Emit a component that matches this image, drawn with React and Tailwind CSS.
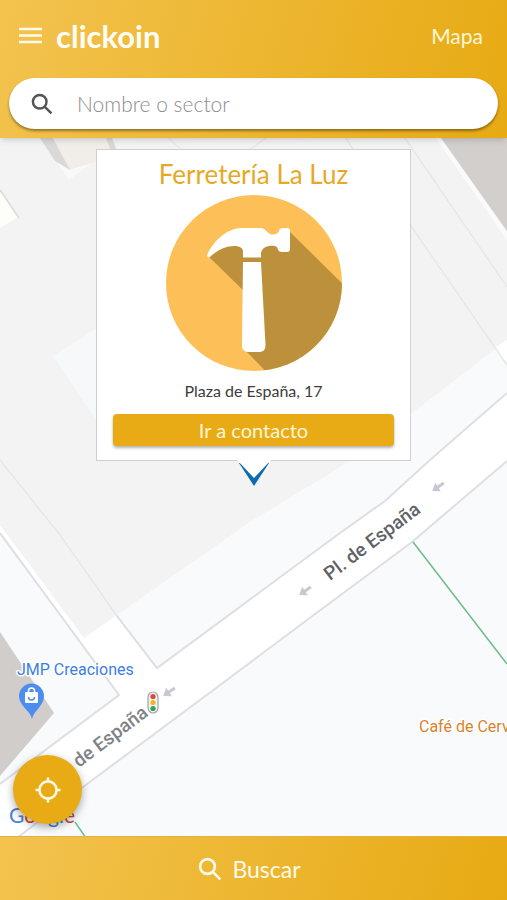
import React from 'react';

const MenuIcon = () => (
  <svg width="24" height="24" viewBox="0 0 24 24" fill="#fffbea">
    <rect x="1" y="3.700" width="23" height="2.600" rx="0.5" />
    <rect x="1" y="10.200" width="23" height="2.600" rx="0.5" />
    <rect x="1" y="16.700" width="23" height="2.600" rx="0.5" />
  </svg>
);

const SearchIcon = ({ size, strokeWidth }) => (
  <svg width={size} height={size} viewBox="0 0 24 24" fill="none" stroke="currentColor" strokeWidth={strokeWidth}>
    <circle cx="9.5" cy="9.5" r="7.4" />
    <path d="M14.8 14.8 L22.3 22.3" />
  </svg>
);

const LocationIcon = () => (
  <svg width="26" height="26" viewBox="0 0 26 26" fill="none" stroke="#fff9e8" strokeWidth="2.6">
    <circle cx="13" cy="13" r="8.6" />
    <path d="M13 0.5 V4.500 M13 21.500 V25.5 M0.5 13 H4.500 M21.500 13 H25.5" />
  </svg>
);

const HammerLogo = () => (
  <svg className="w-[176px] h-[176px]" viewBox="0 0 176 176" role="img" aria-label="Martillo">
    <defs>
      <clipPath id="disc">
        <circle cx="88" cy="88" r="88" />
      </clipPath>
    </defs>
    <circle cx="88" cy="88" r="88" fill="#fdc058" />
    <g clipPath="url(#disc)">
      <path d="M43 62 L60 51 L90 48 L124 37 L186 98 L186 186 L109 186 L80 156 L80 98 Z" fill="#bd913b" />
    </g>
    <g fill="#fff">
      <path d="M42 62 C40 61 42 58 43 56 C50 44 62 33 76 33 L95 33 C99 33 101 38 105 39.500 C110 40 112 38 113 36 C113 34 115 33 117 33 L121 33 C123 33 124 34 124 36 L124 53 C124 56 123 57 121 57 L116 57 C112 57 112 54 111 52 C106 49 96 51 95 58 L95 62.500 L77 62.500 L77 56 C76 48 57 50 46 60 C44 62 43 63 42 62 Z" />
      <path d="M77 67 L95 67 L99.500 150 C99.500 155 97 157 93 157 L83 157 C79 157 76 155 76 151 Z" />
    </g>
  </svg>
);

const RoadArrow = ({ x, y }) => (
  <g transform={`translate(${x} ${y}) rotate(-34)`} fill="#c6c9d2">
    <path d="M-7 0 L0 -5 L0 -1.500 L7 -1.500 L7 1.500 L0 1.500 L0 5 Z" />
  </g>
);

const StreetMap = () => (
  <svg
    className="absolute inset-0 w-full h-full"
    viewBox="0 138 507 698"
    preserveAspectRatio="xMidYMid slice"
    fontFamily="Roboto, 'Liberation Sans', sans-serif"
  >
    <rect x="0" y="138" width="507" height="698" fill="#f8fafc" />

    {/* Roads */}
    <path d="M0 460 L60 535 L117 616 L157 668 L260 592 L340 533 L385 501 L430 460 L507 393 L507 461 L412 542 L307 620 L200 700 L83 787 L17 838 L0 838 L0 784 L119 695 L0 533 Z" fill="#fff" />
    <g fill="none" stroke="#dddfe2" strokeWidth="2">
      <path d="M0 460 L60 535 L117 616 L157 668 L260 592 L340 533 L385 501 L430 460 L507 393" />
      <path d="M0 533 L119 695 L0 784" />
      <path d="M507 461 L412 542 L307 620 L200 700 L83 787 L17 838" />
    </g>

    {/* Highlighted area */}
    <path d="M0 138 L507 138 L507 340 L350 461 L250 522 L84 638 L0 525 Z" fill="#f3f3f3" />
    <path d="M496 347 L507 340 L507 363 Z" fill="#fff" />
    <g fill="none" stroke="#e7e7e7" strokeWidth="1.500">
      <path d="M0 460 L60 535 L117 616" />
      <path d="M405 138 L507 287" />
      <path d="M411 226 L507 365" />
      <path d="M168 138 L188 155" />
      <path d="M266 138 L248 151" />
      <path d="M346 138 L354 151" />
    </g>
    <path d="M53 356 L97 328 L97 421 Z" fill="#f6f8f9" />
    <path d="M0 190 L18 217 L0 228 Z" fill="#fdfdfa" />
    <path d="M0 190 L19 218" stroke="#dadada" strokeWidth="1.500" />
    <path d="M54 138 L108 138 L114 152 L92 163 L69 170 Z" fill="#f1eeea" />
    <path d="M56 161 L69 170 L92 163 L69 180 Z" fill="#f9f9f9" />
    <path d="M40 138 L53 138 L70 170 L55 161 Z" fill="#dbd9d8" />
    <path d="M106 138 L112 138 L117 151 L111 151 Z" fill="#dbd9d8" />
    <path d="M436 138 L441 138 L507 232 L507 240 Z" fill="#fbfbfb" />
    <path d="M441 138 L507 138 L507 231 Z" fill="#d3cfcd" />
    <path d="M0 632 L54 713 L0 776 Z" fill="#d1cdcb" />

    <g stroke="#6dbd86" strokeWidth="1.500">
      <path d="M413 542 L507 664" />
      <path d="M75 822 L86 838" />
    </g>

    <RoadArrow x={438} y={487} />
    <RoadArrow x={305} y={591} />
    <RoadArrow x={169} y={692} />

    <text transform="translate(330 581) rotate(-37)" fontSize="19" fontWeight="500" fill="#5f6368">Pl. de España</text>
    <text transform="translate(79 768) rotate(-37)" fontSize="19" fontWeight="500" fill="#808386">de España</text>

    {/* Traffic light */}
    <rect x="148" y="692" width="10" height="21" rx="5" fill="#f1f1f1" stroke="#a3a3a3" strokeWidth="1.200" />
    <circle cx="153" cy="696.500" r="2.600" fill="#e0443a" />
    <circle cx="153" cy="702.500" r="2.600" fill="#f4b524" />
    <circle cx="153" cy="708.500" r="2.600" fill="#31a352" />

    {/* Shop marker */}
    <path d="M32 719 C30 710 19 706 19 696 A12.500 12.500 0 0 1 44 696 C44 706 34 710 32 719 Z" fill="#4e8df0" />
    <rect x="25" y="692" width="13" height="11" rx="1" fill="#fff" />
    <path d="M28.500 692 V691 A3 3 0 0 1 34.500 691 V692" fill="none" stroke="#fff" strokeWidth="1.500" />
    <path d="M28.500 697 A3 3 0 0 0 34.500 697" fill="none" stroke="#4e8df0" strokeWidth="1.500" />

    <g fontSize="16" stroke="#fff" strokeWidth="3" strokeLinejoin="round" paintOrder="stroke">
      <text x="17" y="675" fill="#3c7ee8">JMP Creaciones</text>
      <text x="419" y="732" fill="#d9822f">Café de Cerv</text>
    </g>

    <text x="9" y="823" fontSize="21" fontFamily="Lato, sans-serif">
      <tspan fill="#4a80d8">G</tspan>
      <tspan fill="#d14836">o</tspan>
      <tspan fill="#f0b41e">o</tspan>
      <tspan fill="#4a80d8">g</tspan>
      <tspan fill="#34a060">l</tspan>
      <tspan fill="#d14836">e</tspan>
    </text>
  </svg>
);

const Header = () => (
  <header className="relative z-10 bg-linear-[105deg] from-[#f3c34f] to-[#e7aa13] shadow-md">
    <div className="flex items-center h-[72px] pl-[18px] pr-6">
      <button type="button" aria-label="Menú" className="cursor-pointer">
        <MenuIcon />
      </button>
      <span className="ml-3.5 text-[31px] leading-8 font-bold text-[#fffdf5]">clickoin</span>
      <a href="#mapa" className="ml-auto text-[21px] leading-7 text-[#fff6d8]">Mapa</a>
    </div>
    <div className="px-[9px] pt-1.5 pb-[9px]">
      <label className="flex items-center h-[51px] pl-[22px] pr-6 rounded-full bg-white text-[#555] shadow-[0_2px_3px_rgba(0,0,0,0.4)]">
        <SearchIcon size={22} strokeWidth={2.7} />
        <input
          type="text"
          aria-label="Nombre o sector"
          placeholder="Nombre o sector"
          className="ml-6 flex-1 min-w-0 text-[21px] leading-7 font-light text-gray-700 placeholder:text-[#8e8e8e] outline-none"
        />
      </label>
    </div>
  </header>
);

const BusinessCard = ({ name, address }) => (
  <article className="relative w-[315px] max-w-full bg-white border border-[#cfcfcf] px-4 pt-2 pb-3.5 flex flex-col items-center">
    <h2 className="text-[26px] leading-8 text-[#e5aa25]">{name}</h2>
    <div className="mt-[5px]">
      <HammerLogo />
    </div>
    <p className="mt-2 text-base leading-6 text-[#3c3c3c]">{address}</p>
    <button
      type="button"
      className="mt-[11px] w-full h-8 rounded bg-[#e8ab15] text-[20px] leading-6 text-[#fff6d8] shadow-[0_2px_3px_rgba(0,0,0,0.3)] cursor-pointer"
    >
      Ir a contacto
    </button>
    {/* Pointer */}
    <svg className="absolute top-full left-1/2 -translate-x-1/2" width="34" height="28" viewBox="0 0 34 28">
      <path d="M2 3 L17 26 L32 3 Z" fill="#0c6cae" />
      <path d="M0 0 H34 L17 18 Z" fill="#fff" />
    </svg>
  </article>
);

const App = () => (
  <div className="min-h-screen flex flex-col overflow-hidden font-[Lato,'Liberation_Sans',sans-serif]">
    <Header />

    <main className="relative flex-1 flex flex-col items-center justify-between pt-[11px] pb-3">
      <StreetMap />
      <BusinessCard name="Ferretería La Luz" address="Plaza de España, 17" />
      <button
        type="button"
        aria-label="Mi ubicación"
        className="relative self-start ml-[13px] w-[69px] h-[69px] rounded-full bg-[#e8ab15] flex items-center justify-center shadow-[0_3px_8px_rgba(0,0,0,0.35)] cursor-pointer"
      >
        <LocationIcon />
      </button>
    </main>

    <footer className="relative bg-linear-[105deg] from-[#f3c34f] to-[#e7aa13] border-t border-[#e3b040]">
      <button type="button" className="w-full h-[63px] pr-2 flex items-center justify-center gap-2.5 text-[23px] leading-7 text-[#fffbea] cursor-pointer">
        <SearchIcon size={24} strokeWidth={2.6} />
        Buscar
      </button>
    </footer>
  </div>
);

export default App;
